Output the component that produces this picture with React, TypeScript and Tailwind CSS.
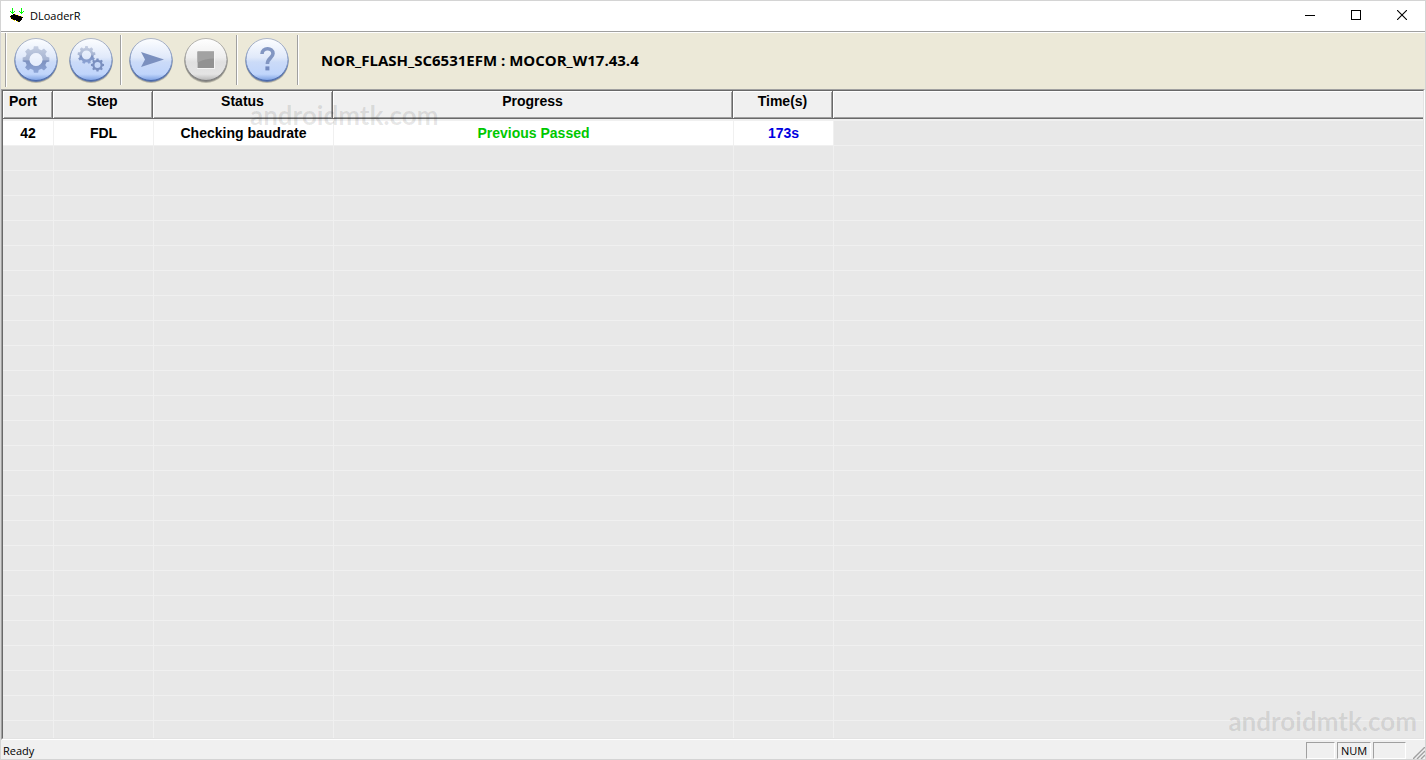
import type { ReactNode } from 'react'

type Column = { id: string; label: string; col: string; head: string }

const columns: Column[] = [
  { id: 'port', label: 'Port', col: 'w-[50px]', head: 'text-left' },
  { id: 'step', label: 'Step', col: 'w-[100px]', head: 'text-center' },
  { id: 'status', label: 'Status', col: 'w-[180px]', head: 'text-center' },
  { id: 'progress', label: 'Progress', col: 'w-[400px]', head: 'text-center' },
  { id: 'time', label: 'Time(s)', col: 'w-[100px]', head: 'text-center' },
]

const ports = [
  { port: '42', step: 'FDL', status: 'Checking baudrate', progress: 'Previous Passed', time: '173s' },
]

const emptyRows = Array.from({ length: 60 }, (_, i) => i)

// outline of a toothed wheel centred on cx, cy
function gearPath(cx: number, cy: number, outer: number, inner: number, hole: number, teeth: number) {
  const step = (Math.PI * 2) / teeth
  const pts: string[] = []
  for (let i = 0; i < teeth; i++) {
    const a = i * step - Math.PI / 2
    const corners = [
      [-0.32, inner],
      [-0.2, outer],
      [0.2, outer],
      [0.32, inner],
    ]
    corners.forEach(([t, r]) => {
      pts.push(`${(cx + r * Math.cos(a + t * step)).toFixed(2)} ${(cy + r * Math.sin(a + t * step)).toFixed(2)}`)
    })
  }
  return `M${pts.join('L')}ZM${cx - hole} ${cy}a${hole} ${hole} 0 1 0 ${hole * 2} 0a${hole} ${hole} 0 1 0 ${-hole * 2} 0Z`
}

function Orb({ id, gray, children }: { id: string; gray?: boolean; children: ReactNode }) {
  const rim = gray ? '#7a7a7a' : '#4766a8'
  return (
    <svg viewBox="0 0 48 48" className="block size-12">
      <defs>
        <linearGradient id={`${id}-ball`} x1="0" y1="0" x2="0" y2="1">
          <stop offset="0" stopColor={gray ? '#ffffff' : '#fdfeff'} />
          <stop offset="0.45" stopColor={gray ? '#eeeeee' : '#e0e9fa'} />
          <stop offset="0.56" stopColor={gray ? '#e0e0e0' : '#cbdbf8'} />
          <stop offset="0.85" stopColor={gray ? '#e4e4e4' : '#c0d5fb'} />
          <stop offset="1" stopColor={gray ? '#b5b5b5' : '#7b9fe2'} />
        </linearGradient>
        <linearGradient id={`${id}-rim`} x1="0" y1="0" x2="0" y2="1">
          <stop offset="0" stopColor={gray ? '#b8b6b0' : '#aeb6c6'} />
          <stop offset="0.6" stopColor={gray ? '#9c9c9c' : '#8098c8'} />
          <stop offset="1" stopColor={rim} />
        </linearGradient>
        <linearGradient id={`${id}-mark`} x1="0" y1="0" x2="0" y2="1">
          <stop offset="0" stopColor="#c6cfe2" />
          <stop offset="0.5" stopColor="#a6b4d2" />
          <stop offset="0.56" stopColor="#7e92c0" />
          <stop offset="1" stopColor="#8ea6d8" />
        </linearGradient>
      </defs>
      <circle cx="24" cy="25.3" r="21.7" fill="#7c796e" opacity="0.45" />
      <circle cx="24" cy="24.5" r="21.5" fill={rim} opacity="0.75" />
      <circle cx="24" cy="23.5" r="21" fill={`url(#${id}-ball)`} stroke={`url(#${id}-rim)`} strokeWidth="1" />
      {children}
    </svg>
  )
}

function ToolButton({ label, children }: { label: string; children: ReactNode }) {
  return (
    <button type="button" aria-label={label} title={label} className="size-12 shrink-0">
      {children}
    </button>
  )
}

function Divider() {
  return <div className="h-[50px] w-[2px] shrink-0 border-l border-[#a0a0a0] bg-white" />
}

function AppIcon() {
  return (
    <svg viewBox="0 0 16 16" className="size-4" shapeRendering="crispEdges">
      <path d="M4 6h2v1h3v1h3v1h2v1h-1v2h-1v1h-1v1h-2v-1h-2v-1h-3v-1h-2v-1h-1v-2h1v-1h1z" fill="#000" />
      <path d="M3 0h1v6h-1zM2 4h3v1h-3zM1 3h1v1h-1zM5 3h1v1h-1zM12 0h1v6h-1zM11 4h3v1h-3zM10 3h1v1h-1zM14 3h1v1h-1z" fill="#00ff00" />
      <path d="M1 9h1v1h-1zM3 11h1v1h-1zM5 12h1v1h-1zM8 13h1v1h-1zM6 6h1v1h-1zM9 7h1v1h-1zM12 8h1v1h-1z" fill="#f5e400" />
    </svg>
  )
}

const captionButton = 'flex h-full w-[46px] items-center justify-center pb-[2px]'

function TitleBar() {
  return (
    <header className="flex h-[30px] shrink-0 items-center bg-white">
      <div className="flex flex-1 items-center gap-[5px] pl-2">
        <AppIcon />
        <h1 className="font-['Open_Sans','Noto_Sans',sans-serif] text-[11px] leading-4">DLoaderR</h1>
      </div>
      <button type="button" aria-label="Minimize" className={captionButton}>
        <svg viewBox="0 0 10 10" className="size-[10px]" shapeRendering="crispEdges">
          <path d="M0 5h10v1h-10z" />
        </svg>
      </button>
      <button type="button" aria-label="Maximize" className={captionButton}>
        <svg viewBox="0 0 10 10" className="size-[10px]" shapeRendering="crispEdges">
          <path d="M0.5 0.5h9v9h-9z" fill="none" stroke="#000" />
        </svg>
      </button>
      <button type="button" aria-label="Close" className={captionButton}>
        <svg viewBox="0 0 10 10" className="size-[10px]">
          <path d="M0 0l10 10M10 0l-10 10" fill="none" stroke="#000" strokeWidth="1.1" />
        </svg>
      </button>
    </header>
  )
}

function Toolbar() {
  return (
    <div className="flex h-[58px] shrink-0 items-center border-t border-[#a0a0a0] bg-[#ece9d8] pb-[2px] pl-1 shadow-[inset_0_1px_0_#fff]">
      <div className="h-[54px] w-[2px] shrink-0 border-l border-[#a0a0a0] bg-white" />
      <div className="flex items-center gap-[7px] px-[5px]">
        <ToolButton label="Load packet">
          <Orb id="load">
            <path d={gearPath(24, 23.5, 13.5, 10.8, 6.5, 8)} fill="url(#load-mark)" fillRule="evenodd" />
            <circle cx="24" cy="23.5" r="6.5" fill="#f3f7fe" opacity="0.7" />
          </Orb>
        </ToolButton>
        <ToolButton label="Settings">
          <Orb id="settings">
            <path d={gearPath(19.5, 19, 9, 7.2, 4.6, 9)} fill="url(#settings-mark)" fillRule="evenodd" />
            <path d={gearPath(30.5, 29, 6.6, 5.2, 3, 8)} fill="#7b90c0" fillRule="evenodd" />
          </Orb>
        </ToolButton>
      </div>
      <Divider />
      <div className="flex items-center gap-[7px] pr-[6px] pl-[5px]">
        <ToolButton label="Start downloading">
          <Orb id="start">
            <path d="M14 16L37 23.5L14 31L18 23.5Z" fill="#7b90bf" />
          </Orb>
        </ToolButton>
        <ToolButton label="Stop downloading">
          <Orb id="stop" gray>
            <path d="M15 15h18v18h-18z" fill="#f4f4f4" />
            <path d="M15.5 15.5h16.5v16.5h-16.5z" fill="#929292" />
            <path d="M15.5 15.5h16.5v7q-9 0 -16.5 4z" fill="#a2a2a2" />
          </Orb>
        </ToolButton>
      </div>
      <Divider />
      <div className="flex items-center pr-[6px] pl-[5px]">
        <ToolButton label="About">
          <Orb id="about">
            <path
              d="M19 18C19 11.2 30 11 30 17.6C30 22 24.4 22 24.4 28"
              fill="none"
              stroke="#8296c2"
              strokeWidth="3.6"
            />
            <path d="M22.4 30.4h4v4h-4z" fill="#7289be" />
          </Orb>
        </ToolButton>
      </div>
      <Divider />
      <p className="pl-[22px] font-['Open_Sans','Noto_Sans',sans-serif] text-[15px] leading-5 font-bold whitespace-nowrap">
        NOR_FLASH_SC6531EFM : MOCOR_W17.43.4
      </p>
    </div>
  )
}

const headCell =
  'h-7 border-r border-b border-[#696969] bg-[#f0f0f0] px-[6px] pt-0 align-top leading-5 font-bold shadow-[inset_1px_1px_0_#fff,inset_-1px_-1px_0_#a0a0a0]'

function PortTable() {
  return (
    <table className="w-full table-fixed border-separate border-spacing-0 font-['Liberation_Sans',Arial,sans-serif] text-[14px]">
      <colgroup>
        {columns.map((c) => (
          <col key={c.id} className={c.col} />
        ))}
        <col />
      </colgroup>
      <thead>
        <tr>
          {columns.map((c) => (
            <th key={c.id} scope="col" className={`${headCell} ${c.head}`}>
              {c.label}
            </th>
          ))}
          <td className="h-7 border-b border-[#696969] bg-[#f0f0f0] shadow-[inset_1px_1px_0_#fff,inset_0_-1px_0_#a0a0a0]" />
        </tr>
      </thead>
      <tbody className="[&_td]:border-[#f0f0f0]">
        {ports.map((p) => (
          <tr key={p.port} className="text-center leading-5 font-bold [&>td]:h-[27px] [&>td]:border-t-2 [&>td]:border-b">
            <td className="bg-white">{p.port}</td>
            <td className="border-l bg-white">{p.step}</td>
            <td className="border-l bg-white">{p.status}</td>
            <td className="border-l bg-white text-[#00c800]">{p.progress}</td>
            <td className="border-l bg-white text-[#0000e0]">{p.time}</td>
            <td className="border-l" />
          </tr>
        ))}
        {emptyRows.map((i) => (
          <tr key={i} className="[&>td]:h-[25px] [&>td]:border-b">
            <td />
            <td className="border-l" />
            <td className="border-l" />
            <td className="border-l" />
            <td className="border-l" />
            <td className="border-l" />
          </tr>
        ))}
      </tbody>
    </table>
  )
}

function StatusBar() {
  const pane = 'h-[17px] border border-t-[#a0a0a0] border-r-white border-b-white border-l-[#a0a0a0]'
  return (
    <footer className="flex h-[19px] shrink-0 items-end bg-[#f0f0f0] pl-[2px] font-['Open_Sans','Noto_Sans',sans-serif] text-[11px] leading-4">
      <span className="flex-1">Ready</span>
      <div className="flex gap-[2px]">
        <div className={`${pane} w-[29px]`} />
        <div className={`${pane} w-[34px] text-center`}>NUM</div>
        <div className={`${pane} w-[33px]`} />
      </div>
      <svg viewBox="0 0 12 12" className="ml-[7px] size-3">
        <path d="M0 12L12 0M4 12L12 4M8 12L12 8" stroke="#a0a0a0" strokeWidth="1.4" />
      </svg>
    </footer>
  )
}

function Watermark({ className }: { className: string }) {
  return (
    <span
      aria-hidden="true"
      className={`pointer-events-none absolute font-['Lato',sans-serif] text-[26px] leading-7 font-bold text-black/10 ${className}`}
    >
      androidmtk.com
    </span>
  )
}

export default function App() {
  return (
    <div className="relative flex h-screen flex-col overflow-hidden border border-[#d4d4d4] bg-[#f0f0f0] text-black">
      <TitleBar />
      <Toolbar />
      <main className="min-h-0 flex-1 border-t border-r border-b border-l border-t-[#a0a0a0] border-r-white border-b-white border-l-[#a0a0a0]">
        <div className="h-full overflow-hidden border border-t-[#696969] border-r-[#e3e3e3] border-b-[#e3e3e3] border-l-[#696969] bg-[#e8e8e8]">
          <PortTable />
        </div>
      </main>
      <StatusBar />
      <Watermark className="top-[100px] left-[249px]" />
      <Watermark className="right-[8px] bottom-[24px]" />
    </div>
  )
}
